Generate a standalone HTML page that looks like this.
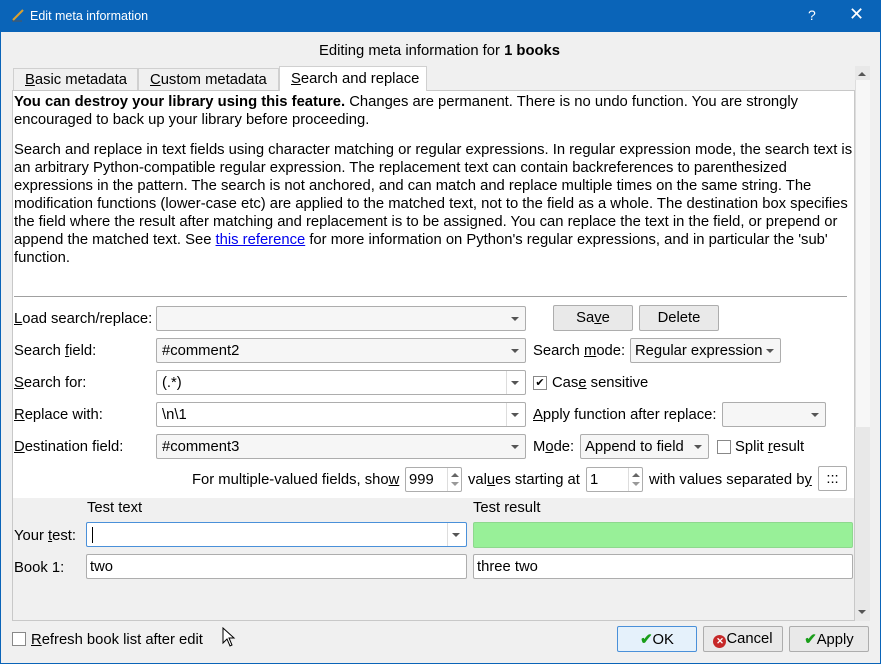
<!DOCTYPE html>
<html><head><style>
*{margin:0;padding:0;box-sizing:border-box}
body{width:881px;height:664px;overflow:hidden;background:#f0f0f0;font-family:"Liberation Sans",sans-serif;font-size:14.8px;color:#000;position:relative}
.a{position:absolute;white-space:nowrap}
.tb{left:0;top:0;width:881px;height:32px;background:#0a64b8;color:#fff}
.u{text-decoration:underline}
.combo{position:absolute;height:25px;border:1px solid #adadad;border-radius:2px;background:#f6f6f6;padding:4px 0 0 5px;white-space:nowrap}
.combo.e{background:#fff}
.combo:after{content:"";position:absolute;right:6px;top:10px;border-left:4px solid transparent;border-right:4px solid transparent;border-top:4px solid #555}
.combo.e .sep{position:absolute;right:18px;top:0;bottom:0;border-left:1px solid #ddd}
.btn{position:absolute;height:26px;border:1px solid #adadad;border-radius:2px;background:#e9e9e9;text-align:center;padding-top:4px}
.inp{position:absolute;height:25px;border:1px solid #adadad;border-radius:2px;background:#fff;padding:4px 0 0 3px}
.cb{position:absolute;width:14px;height:14px;border:1px solid #888;background:#fff}
.spin{position:absolute;right:0;top:0;bottom:0;width:14px;border-left:1px solid #ddd}
.spin:before{content:"";position:absolute;left:3px;top:5px;border-left:4px solid transparent;border-right:4px solid transparent;border-bottom:4px solid #666}
.spin:after{content:"";position:absolute;left:3px;top:14px;border-left:4px solid transparent;border-right:4px solid transparent;border-top:4px solid #999}
</style></head><body>
<div class="a tb">
 <svg class="a" style="left:10px;top:7px" width="16" height="16"><path d="M3 13 L13 3" stroke="#d9a030" stroke-width="2"/><path d="M2 14 L12 14" stroke="#555"/></svg>
 <div class="a" style="left:30px;top:9px;font-size:12.5px">Edit meta information</div>
 <div class="a" style="left:808px;top:7px;font-size:14px">?</div>
 <div class="a" style="left:849px;top:4px;font-size:18px">✕</div>
</div>
<div class="a" style="left:0;top:32px;width:1px;height:632px;background:#0a64b8"></div>
<div class="a" style="right:0;top:32px;width:1px;height:632px;background:#0a64b8"></div>
<div class="a" style="left:0;bottom:0;width:881px;height:1px;background:#0a64b8"></div>

<div class="a" style="left:319px;top:43px">Editing meta information for <b>1 books</b></div>

<div class="a" style="left:13px;top:68px;width:125px;height:23px;border:1px solid #d0d0d0;border-bottom:none;background:#f0f0f0;padding:3px 0 0 11px"><span class="u">B</span>asic metadata</div>
<div class="a" style="left:138px;top:68px;width:141px;height:23px;border:1px solid #d0d0d0;border-bottom:none;background:#f0f0f0;padding:3px 0 0 11px"><span class="u">C</span>ustom metadata</div>
<div class="a" style="left:279px;top:66px;width:148px;height:25px;border:1px solid #d0d0d0;border-bottom:none;background:#fff;padding:4px 0 0 11px;z-index:2"><span class="u">S</span>earch and replace</div>

<div class="a" style="left:12px;top:90px;width:843px;height:531px;border:1px solid #c8c8c8;background:#fff"></div>
<div class="a" style="left:13px;top:498px;width:841px;height:122px;background:#f0f0f0"></div>
<div class="a" style="left:855px;top:66px;width:15px;height:555px;background:#e8e8e8"></div>
<div class="a" style="left:855px;top:80px;width:15px;height:347px;background:#f7f7f7;border-left:1px solid #ddd"></div>
<div class="a" style="left:858px;top:72px;border-left:4px solid transparent;border-right:4px solid transparent;border-bottom:4px solid #555"></div>
<div class="a" style="left:858px;top:610px;border-left:4px solid transparent;border-right:4px solid transparent;border-top:4px solid #555"></div>

<div class="a" style="left:14px;top:93px;line-height:18px">
<div><b>You can destroy your library using this feature.</b> Changes are permanent. There is no undo function. You are strongly</div>
<div>encouraged to back up your library before proceeding.</div>
<div style="height:12px"></div>
<div>Search and replace in text fields using character matching or regular expressions. In regular expression mode, the search text is</div>
<div>an arbitrary Python-compatible regular expression. The replacement text can contain backreferences to parenthesized</div>
<div>expressions in the pattern. The search is not anchored, and can match and replace multiple times on the same string. The</div>
<div>modification functions (lower-case etc) are applied to the matched text, not to the field as a whole. The destination box specifies</div>
<div>the field where the result after matching and replacement is to be assigned. You can replace the text in the field, or prepend or</div>
<div>append the matched text. See <span class="u" style="color:#0000ee">this reference</span> for more information on Python's regular expressions, and in particular the 'sub'</div>
<div>function.</div>
</div>
<div class="a" style="left:14px;top:296px;width:833px;height:1px;background:#a0a0a0"></div>

<div class="a" style="left:14px;top:311px"><span class="u">L</span>oad search/replace:</div>
<div class="a" style="left:14px;top:343px">Search <span class="u">f</span>ield:</div>
<div class="a" style="left:14px;top:375px"><span class="u">S</span>earch for:</div>
<div class="a" style="left:14px;top:407px"><span class="u">R</span>eplace with:</div>
<div class="a" style="left:14px;top:439px"><span class="u">D</span>estination field:</div>

<div class="combo" style="left:156px;top:306px;width:370px"></div>
<div class="combo" style="left:156px;top:338px;width:370px">#comment2</div>
<div class="combo e" style="left:156px;top:370px;width:370px">(.*)<span class="sep"></span></div>
<div class="combo e" style="left:156px;top:402px;width:370px">\n\1<span class="sep"></span></div>
<div class="combo" style="left:156px;top:434px;width:370px">#comment3</div>

<div class="btn" style="left:553px;top:305px;width:80px">Sa<span class="u">v</span>e</div>
<div class="btn" style="left:639px;top:305px;width:80px">Delete</div>
<div class="a" style="left:533px;top:343px">Search <span class="u">m</span>ode:</div>
<div class="combo" style="left:630px;top:338px;width:151px;padding-left:4px">Regular expression</div>
<div class="cb" style="left:533px;top:376px;font-size:11px;line-height:12px;text-align:center">✔</div>
<div class="a" style="left:552px;top:375px">Cas<span class="u">e</span> sensitive</div>
<div class="a" style="left:533px;top:407px"><span class="u">A</span>pply function after replace:</div>
<div class="combo" style="left:722px;top:402px;width:104px"></div>
<div class="a" style="left:533px;top:439px">M<span class="u">o</span>de:</div>
<div class="combo" style="left:580px;top:434px;width:129px;padding-left:4px">Append to field</div>
<div class="cb" style="left:717px;top:440px"></div>
<div class="a" style="left:735px;top:439px">Split <span class="u">r</span>esult</div>

<div class="a" style="left:192px;top:472px">For multiple-valued fields, sho<span class="u">w</span></div>
<div class="inp" style="left:405px;top:467px;width:57px">999<span class="spin"></span></div>
<div class="a" style="left:468px;top:472px">val<span class="u">u</span>es starting at</div>
<div class="inp" style="left:586px;top:467px;width:57px">1<span class="spin"></span></div>
<div class="a" style="left:649px;top:472px">with values separated b<span class="u">y</span></div>
<div class="inp" style="left:818px;top:466px;width:29px;text-align:center;padding-left:0">:::</div>

<div class="a" style="left:87px;top:500px">Test text</div>
<div class="a" style="left:473px;top:500px">Test result</div>
<div class="a" style="left:14px;top:528px">Your <span class="u">t</span>est:</div>
<div class="combo e" style="left:86px;top:522px;width:381px;border-color:#4a90d9"><span style="border-left:1px solid #000;height:16px;display:inline-block;vertical-align:middle"></span><span class="sep"></span></div>
<div class="a" style="left:473px;top:522px;width:380px;height:26px;background:#98f098;border:1px solid #8ed88e;border-radius:2px"></div>
<div class="a" style="left:14px;top:560px">Book 1:</div>
<div class="inp" style="left:86px;top:554px;width:381px">two</div>
<div class="inp" style="left:473px;top:554px;width:380px">three two</div>

<div class="cb" style="left:12px;top:632px"></div>
<div class="a" style="left:31px;top:632px"><span class="u">R</span>efresh book list after edit</div>
<svg class="a" style="left:222px;top:627px" width="14" height="20"><path d="M1 1 L1 16 L5 12 L8 19 L10 18 L7 11 L12 11 Z" fill="#fff" stroke="#000"/></svg>

<div class="btn" style="left:617px;top:626px;width:80px;border-color:#4a90d9;background:#e5f1fb"><span style="color:#1a9e1a;font-weight:bold">✔</span>OK</div>
<div class="btn" style="left:703px;top:626px;width:80px"><span style="display:inline-block;width:13px;height:13px;border-radius:50%;background:#c62828;color:#fff;font-size:9px;line-height:13px;font-weight:bold;vertical-align:-1px">✕</span>Cancel</div>
<div class="btn" style="left:789px;top:626px;width:80px"><span style="color:#1a9e1a;font-weight:bold">✔</span>Apply</div>
</body></html>
